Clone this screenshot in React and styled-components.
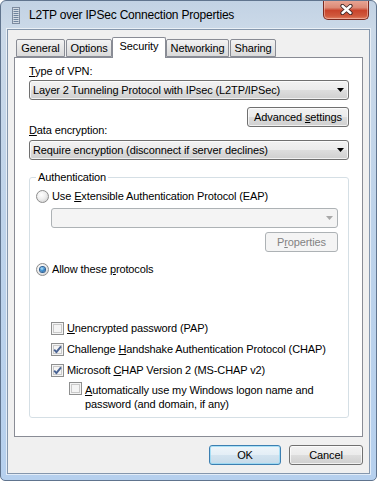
import React from "react";
import styled, { createGlobalStyle } from "styled-components";

const GlobalStyle = createGlobalStyle`
  html, body { margin: 0; padding: 0; background: #fff; }
  body {
    font-family: "Liberation Sans", Arial, sans-serif;
    font-size: 11px;
    letter-spacing: -0.12px;
    color: #000;
  }
`;

const Window = styled.div`
  width: 377px;
  height: 481px;
  box-sizing: border-box;
  display: flex;
  flex-direction: column;
  border: 1px solid #60748e;
  border-radius: 6px 6px 5px 5px;
  overflow: hidden;
  background: linear-gradient(
    to bottom,
    #c2d2e4 0px,
    #cbd9e8 28px,
    #bed3ea 45%,
    #b6d0ee 100%
  );
`;

const TitleBar = styled.div`
  height: 28px;
  flex: none;
  display: flex;
  align-items: flex-start;
  padding-left: 11px;
`;

const AppIcon = styled.svg`
  margin-top: 6px;
  flex: none;
`;

const Title = styled.div`
  margin: 7px 0 0 9px;
  font-size: 12px;
  line-height: 15px;
  letter-spacing: -0.2px;
  color: #000;
`;

const CloseButton = styled.div`
  margin: -1px 7px 0 auto;
  width: 46px;
  height: 20px;
  box-sizing: border-box;
  border: 1px solid #7a2a20;
  border-top: none;
  border-radius: 0 0 5px 5px;
  display: flex;
  align-items: center;
  justify-content: center;
  background: linear-gradient(
    to bottom,
    #e9a898 0%,
    #dc8a76 40%,
    #c9442c 55%,
    #d05a3e 85%,
    #e38466 100%
  );
  box-shadow: inset 0 0 0 1px rgba(255, 220, 210, 0.45);
`;

const Client = styled.div`
  flex: 1;
  margin: 0 6px 6px;
  border: 1px solid #8597ad;
  box-shadow: 0 0 0 1px rgba(255, 255, 255, 0.6);
  background: #f0f0f0;
  display: flex;
  flex-direction: column;
  padding: 7px 6px 8px;
`;

const TabRow = styled.div`
  display: flex;
  align-items: flex-end;
  gap: 1px;
  height: 20px;
  margin-left: 2px;
  position: relative;
  z-index: 1;
`;

const Tab = styled.div`
  box-sizing: border-box;
  width: ${(p) => p.w}px;
  height: ${(p) => (p.active ? 21 : 18)}px;
  margin-bottom: ${(p) => (p.active ? -1 : 0)}px;
  margin-left: ${(p) => (p.active ? -1 : 0)}px;
  margin-right: ${(p) => (p.active ? -1 : 0)}px;
  border: 1px solid #898c95;
  border-bottom: ${(p) => (p.active ? "none" : "1px solid #898c95")};
  border-radius: 2px 2px 0 0;
  background: ${(p) =>
    p.active ? "#fff" : "linear-gradient(to bottom, #f3f3f3, #e6e6e6 50%, #dadada)"};
  text-align: center;
  line-height: ${(p) => (p.active ? 17 : 16)}px;
`;

const Panel = styled.div`
  flex: 1;
  box-sizing: border-box;
  background: #fff;
  border: 1px solid #898c95;
  padding: 6px 13px 0 14px;
  display: flex;
  flex-direction: column;
`;

const Label = styled.div`
  line-height: 14px;
  height: 14px;
  margin-top: ${(p) => p.mt || 0}px;
`;

const Key = styled.span`
  text-decoration: underline;
  text-underline-offset: 1px;
`;

const Combo = styled.div`
  box-sizing: border-box;
  height: 20px;
  margin-top: ${(p) => p.mt || 0}px;
  margin-left: ${(p) => p.ml || 0}px;
  border: 1px solid ${(p) => (p.disabled ? "#adb2b5" : "#707070")};
  border-radius: 3px;
  background: ${(p) =>
    p.disabled
      ? "#f4f4f4"
      : "linear-gradient(to bottom, #f2f2f2 0%, #ebebeb 50%, #dddddd 51%, #cfcfcf 100%)"};
  display: flex;
  align-items: center;
  padding: 0 4px 0 3px;
  line-height: 14px;
  box-shadow: ${(p) => (p.disabled ? "none" : "inset 0 0 0 1px rgba(255,255,255,0.7)")};
`;

const ComboText = styled.span`
  flex: 1;
  white-space: nowrap;
`;

const Button = styled.div`
  box-sizing: border-box;
  height: 20px;
  width: ${(p) => p.w}px;
  margin-top: ${(p) => p.mt || 0}px;
  align-self: flex-end;
  border: 1px solid
    ${(p) => (p.disabled ? "#adb2b5" : p.primary ? "#3c7fb1" : "#707070")};
  border-radius: 3px;
  background: ${(p) =>
    p.disabled
      ? "#f4f4f4"
      : p.primary
      ? "linear-gradient(to bottom, #eef5fa 0%, #e3eef6 50%, #d3e3ef 51%, #c6dbea 100%)"
      : "linear-gradient(to bottom, #f2f2f2 0%, #ebebeb 50%, #dddddd 51%, #cfcfcf 100%)"};
  box-shadow: ${(p) =>
    p.disabled
      ? "none"
      : p.primary
      ? "inset 0 0 0 1px rgba(140, 215, 245, 0.7)"
      : "inset 0 0 0 1px rgba(255,255,255,0.7)"};
  color: ${(p) => (p.disabled ? "#838383" : "#000")};
  text-align: center;
  line-height: 18px;
  white-space: nowrap;
`;

const Group = styled.fieldset`
  margin: 10px 0 0;
  padding: 5px 10px 6px 6px;
  border: 1px solid #d5dfe5;
  border-radius: 3px;
  display: flex;
  flex-direction: column;
  min-width: 0;
`;

const Legend = styled.legend`
  padding: 0 2px;
  line-height: 14px;
`;

const Option = styled.div`
  display: flex;
  align-items: ${(p) => (p.top ? "flex-start" : "center")};
  margin-top: ${(p) => p.mt || 0}px;
  margin-left: ${(p) => p.ml || 0}px;
  min-height: 14px;
`;

const OptionText = styled.div`
  margin-left: ${(p) => p.gap || 4}px;
  margin-top: ${(p) => p.offset || 0}px;
  line-height: 14px;
`;

const Radio = styled.span`
  flex: none;
  width: 13px;
  height: 13px;
  box-sizing: border-box;
  border-radius: 50%;
  border: 1px solid #8d8d8d;
  background: radial-gradient(circle at 40% 35%, #ffffff 0%, #eeeeee 45%, #c9c9c9 100%);
  display: flex;
  align-items: center;
  justify-content: center;
`;

const RadioDot = styled.span`
  width: 5px;
  height: 5px;
  border-radius: 50%;
  background: radial-gradient(circle at 40% 35%, #b9e7fb 0%, #3d8fd0 45%, #1c4f8c 100%);
  box-shadow: 0 0 0 1px #2d5f93;
`;

const Check = styled.span`
  flex: none;
  width: 13px;
  height: 13px;
  box-sizing: border-box;
  border: 1px solid #8e8f8f;
  background: #f4f4f4;
  display: flex;
  align-items: center;
  justify-content: center;
  box-shadow: inset 0 0 0 1px #f4f4f4, inset 0 0 0 2px #c9c9c9;
`;

const ButtonRow = styled.div`
  display: flex;
  justify-content: flex-end;
  gap: 8px;
  margin-top: 8px;
`;

const Arrow = ({ color = "#000" }) => (
  <svg width="7" height="4" viewBox="0 0 7 4">
    <path d="M0 0 H7 L3.5 4 Z" fill={color} />
  </svg>
);

const Tick = () => (
  <svg width="9" height="9" viewBox="0 0 9 9">
    <path
      d="M1.2 4.6 L3.4 7.2 L8 1.4"
      fill="none"
      stroke="#4a6494"
      strokeWidth="1.9"
      strokeLinejoin="round"
    />
  </svg>
);

const tabs = [
  { name: "General", w: 49 },
  { name: "Options", w: 46 },
  { name: "Security", w: 54, active: true },
  { name: "Networking", w: 63 },
  { name: "Sharing", w: 46 },
];

export default function App() {
  return (
    <>
      <GlobalStyle />
      <Window>
        <TitleBar>
          <AppIcon width="8" height="17" viewBox="0 0 8 17">
            <rect x="0.5" y="0.5" width="7" height="16" fill="#d3dbe4" stroke="#7d8ba0" />
            {[2, 4, 6, 8, 10, 12, 14].map((y) => (
              <rect key={y} x="1.5" y={y} width="5" height="1" fill="#6f849e" />
            ))}
          </AppIcon>
          <Title>L2TP over IPSec Connection Properties</Title>
          <CloseButton>
            <svg width="13" height="11" viewBox="0 0 13 11">
              <path d="M2.5 2 L10.5 9 M10.5 2 L2.5 9" stroke="#3a2424" strokeWidth="4.2" strokeLinecap="round" />
              <path d="M2.5 2 L10.5 9 M10.5 2 L2.5 9" stroke="#ffffff" strokeWidth="2.4" strokeLinecap="round" />
            </svg>
          </CloseButton>
        </TitleBar>

        <Client>
          <TabRow>
            {tabs.map((t) => (
              <Tab key={t.name} w={t.w} active={t.active}>
                {t.name}
              </Tab>
            ))}
          </TabRow>

          <Panel>
            <Label>
              <Key>T</Key>ype of VPN:
            </Label>
            <Combo mt={2}>
              <ComboText>Layer 2 Tunneling Protocol with IPsec (L2TP/IPSec)</ComboText>
              <Arrow />
            </Combo>
            <Button w={102} mt={7}>
              Advanced <Key>s</Key>ettings
            </Button>
            <Label mt={-4}>
              <Key>D</Key>ata encryption:
            </Label>
            <Combo mt={3}>
              <ComboText>Require encryption (disconnect if server declines)</ComboText>
              <Arrow />
            </Combo>

            <Group>
              <Legend>Authentication</Legend>
              <Option>
                <Radio />
                <OptionText gap={3}>
                  Use <Key>E</Key>xtensible Authentication Protocol (EAP)
                </OptionText>
              </Option>
              <Combo disabled mt={5} ml={15}>
                <ComboText />
                <Arrow color="#a8a8a8" />
              </Combo>
              <Button disabled w={73} mt={4}>
                P<Key>r</Key>operties
              </Button>
              <Option mt={10}>
                <Radio>
                  <RadioDot />
                </Radio>
                <OptionText gap={3}>
                  Allow these <Key>p</Key>rotocols
                </OptionText>
              </Option>

              <Option mt={45} ml={15}>
                <Check />
                <OptionText gap={3}>
                  <Key>U</Key>nencrypted password (PAP)
                </OptionText>
              </Option>
              <Option mt={7} ml={15}>
                <Check>
                  <Tick />
                </Check>
                <OptionText gap={3}>
                  Challenge <Key>H</Key>andshake Authentication Protocol (CHAP)
                </OptionText>
              </Option>
              <Option mt={7} ml={15}>
                <Check>
                  <Tick />
                </Check>
                <OptionText gap={3}>
                  Microsoft <Key>C</Key>HAP Version 2 (MS-CHAP v2)
                </OptionText>
              </Option>
              <Option top mt={5} ml={33}>
                <Check />
                <OptionText gap={3} offset={1}>
                  <Key>A</Key>utomatically use my Windows logon name and
                  <br />
                  password (and domain, if any)
                </OptionText>
              </Option>
            </Group>
          </Panel>

          <ButtonRow>
            <Button primary w={72}>
              OK
            </Button>
            <Button w={74}>Cancel</Button>
          </ButtonRow>
        </Client>
      </Window>
    </>
  );
}
